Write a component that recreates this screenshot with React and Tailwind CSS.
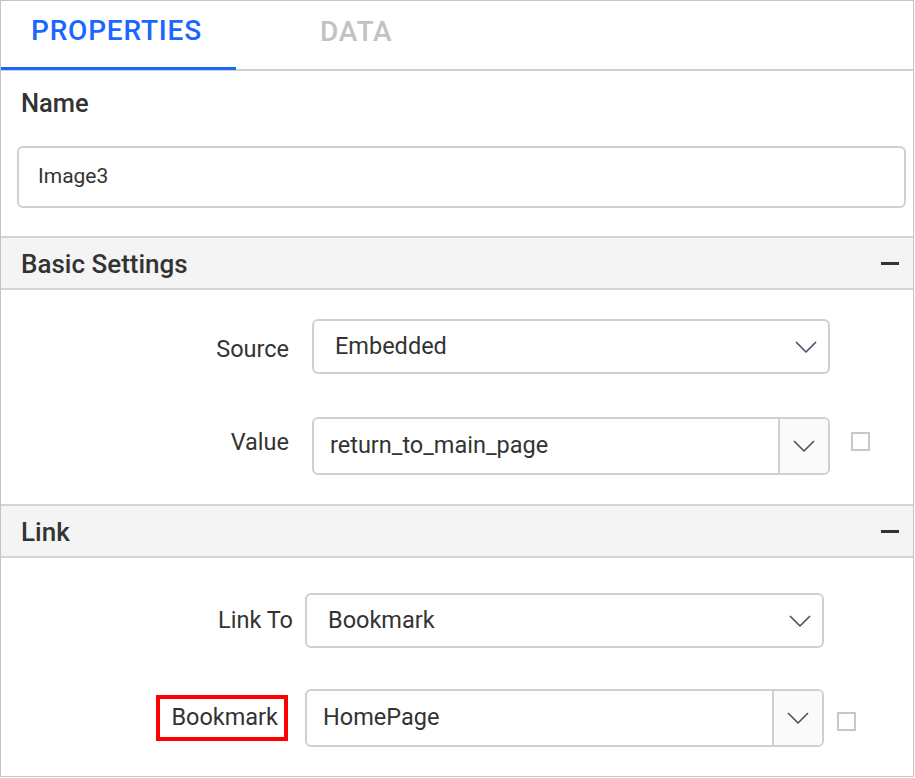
import React from 'react';

const Chevron = () => (
  <svg width="22" height="12" viewBox="0 0 22 12" fill="none">
    <polyline points="1,1 11,11 21,1" stroke="#4b5766" strokeWidth="1.7" strokeLinejoin="round" />
  </svg>
);

const Minus = () => <div className="w-[18px] h-[3px] bg-[#333]" />;

const SectionHeader = ({ title }) => (
  <div className="h-[54px] border-y-2 border-[#d4d4d4] bg-[#f4f4f4] flex items-center justify-between pl-5 pr-[14px]">
    <span className="text-[26px] font-medium text-[#333] pt-[3px]">{title}</span>
    <Minus />
  </div>
);

// plain dropdown: chevron lives inside the box
const Dropdown = ({ value, width, height }) => (
  <div
    className={`${width} ${height} border-2 border-[#d0d0d0] rounded-md flex items-center justify-between pl-[21px] pr-[11px]`}
  >
    <span className="text-[23.5px] text-[#333]">{value}</span>
    <Chevron />
  </div>
);

// combo: text area + separated button
const Combo = ({ value, width }) => (
  <div className={`${width} h-[58px] border-2 border-[#d0d0d0] rounded-md flex overflow-hidden`}>
    <div className="flex-1 flex items-center pl-[16px]">
      <span className="text-[23.5px] text-[#333]">{value}</span>
    </div>
    <div className="w-[50px] border-l-2 border-[#d0d0d0] bg-[#fafafa] flex items-center justify-center">
      <Chevron />
    </div>
  </div>
);

const Checkbox = ({ className }) => (
  <div className={`w-[19px] h-[19px] border-2 border-[#c8c8c8] ${className}`} />
);

export default function App() {
  return (
    <div className="w-[915px] h-[778px] bg-white font-['Roboto',sans-serif] text-[#333]">
      <div className="w-[914px] h-[777px] border border-[#c4c4c4] flex flex-col">
        {/* Tabs */}
        <div className="h-[70px] border-b-2 border-[#d0d0d0] flex shrink-0">
          <div className="w-[235px] h-[69px] -mb-[2px] border-b-[3px] border-[#1a66ff] flex items-center pl-[30px] pb-[6px]">
            <span className="text-[28px] font-medium tracking-[0.8px] text-[#1a66ff]">PROPERTIES</span>
          </div>
          <div className="flex items-center pl-[84px] pb-[6px]">
            <span className="text-[28px] font-medium tracking-[0.8px] text-[#c2c2c2]">DATA</span>
          </div>
        </div>

        {/* Name */}
        <div className="pl-4 pr-[7px] pt-[17px] pb-[28px]">
          <div className="pl-1 text-[25.5px] leading-[30px] font-medium">Name</div>
          <div className="mt-[28px] h-[62px] border-2 border-[#d0d0d0] rounded-md flex items-center pl-[19px]">
            <span className="text-[21px]">Image3</span>
          </div>
        </div>

        {/* Basic Settings */}
        <SectionHeader title="Basic Settings" />
        <div className="pt-[29px] pb-[29px] flex flex-col gap-[43px]">
          <div className="flex items-center">
            <div className="w-[288px] text-right text-[23.5px] pt-[6px]">Source</div>
            <div className="ml-[23px]">
              <Dropdown value="Embedded" width="w-[518px]" height="h-[55px]" />
            </div>
          </div>
          <div className="flex items-center">
            <div className="w-[288px] text-right text-[23.5px] -mt-[6px]">Value</div>
            <div className="ml-[23px]">
              <Combo value="return_to_main_page" width="w-[518px]" />
            </div>
            <Checkbox className="ml-[21px] -mt-[10px]" />
          </div>
        </div>

        {/* Link */}
        <SectionHeader title="Link" />
        <div className="pt-[35px] flex flex-col gap-[41px]">
          <div className="flex items-center">
            <div className="w-[292px] text-right text-[23.5px]">Link To</div>
            <div className="ml-[12px]">
              <Dropdown value="Bookmark" width="w-[519px]" height="h-[55px]" />
            </div>
          </div>
          <div className="flex items-center">
            <div className="w-[292px] flex justify-end">
              <div className="mr-[5px] border-4 border-[#ff0000] pl-[11px] pr-[6px] h-[46px] flex items-center text-[23.5px]">
                Bookmark
              </div>
            </div>
            <div className="ml-[12px]">
              <Combo value="HomePage" width="w-[519px]" />
            </div>
            <Checkbox className="ml-[13px] mt-[6px]" />
          </div>
        </div>
      </div>
    </div>
  );
}
